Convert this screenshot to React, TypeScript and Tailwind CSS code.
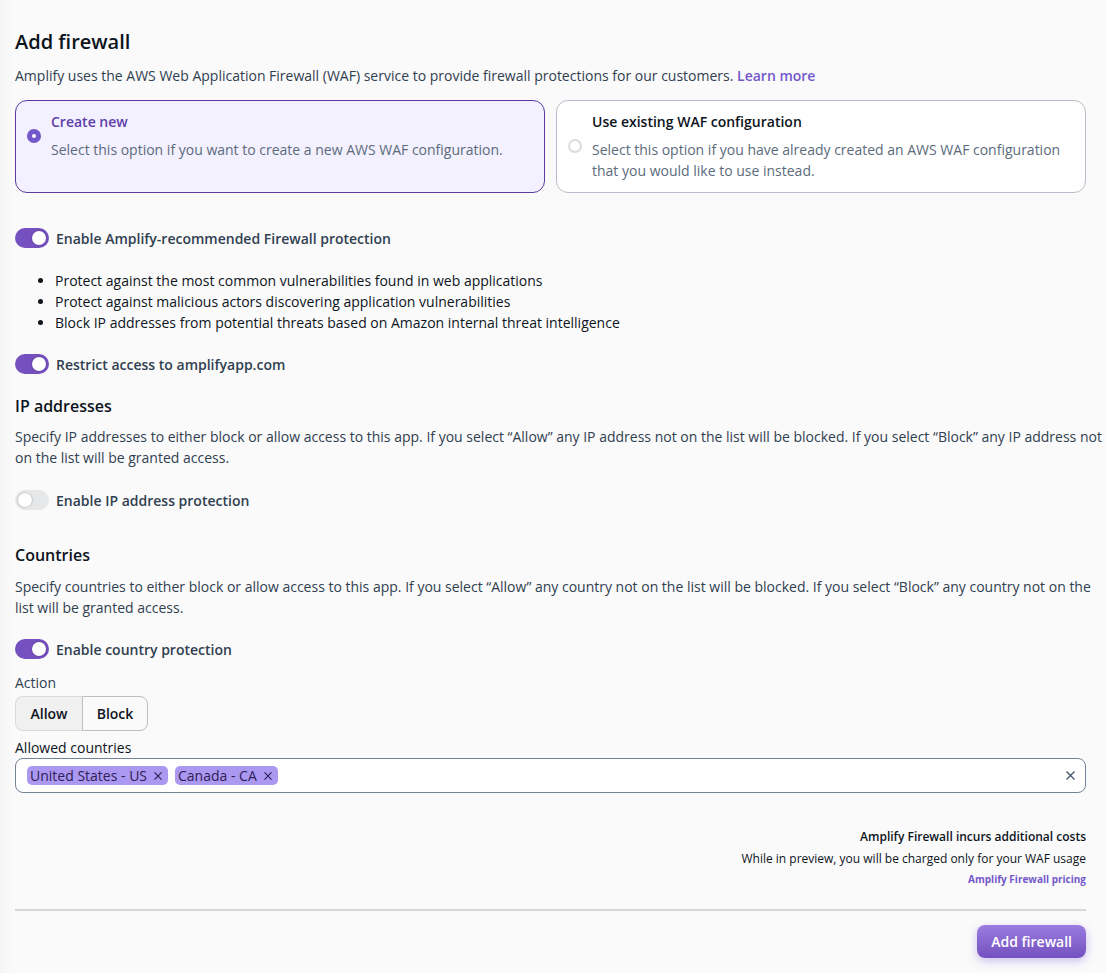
import { useId, useState } from "react";

function Toggle({ label, on }: { label: string; on?: boolean }) {
  return (
    <label className="flex h-5 w-fit items-start gap-[7px] text-sm leading-[22px] font-semibold text-[#304050]">
      <input type="checkbox" role="switch" defaultChecked={on} className="peer sr-only" />
      <span className="flex h-5 w-[34px] shrink-0 items-center rounded-full bg-[#e6e7e9] px-[3px] peer-checked:justify-end peer-checked:bg-[#7550bf]">
        <span className="size-3.5 rounded-full bg-white shadow-[0_0_2px_rgba(0,0,0,0.35)]" />
      </span>
      <span>{label}</span>
    </label>
  );
}

type OptionProps = {
  title: string;
  text: string;
  selected: boolean;
  onSelect: () => void;
};

function OptionCard({ title, text, selected, onSelect }: OptionProps) {
  const id = useId();
  return (
    <label
      htmlFor={id}
      className={
        selected
          ? "rounded-xl border border-[#5a3ba0] bg-[#f3f0ff] px-[11px] pt-2.5 pb-[11px]"
          : "rounded-xl border border-[#bcbbc9] bg-white px-[11px] pt-2.5 pb-[11px]"
      }
    >
      <span className="flex items-center gap-2.5">
        <input
          id={id}
          type="radio"
          name="waf-mode"
          checked={selected}
          onChange={onSelect}
          className="size-3.5 shrink-0 appearance-none rounded-full border-2 border-[#dcdcdc] bg-white checked:border-[5px] checked:border-[#7358cb]"
        />
        <span className="flex flex-col gap-1.5">
          <span
            className={
              selected
                ? "text-sm leading-[22px] font-semibold text-[#5f3fa9]"
                : "text-sm leading-[22px] font-semibold text-[#0d141c]"
            }
          >
            {title}
          </span>
          <span className="text-sm leading-[21px] text-[#5c6b7c]">{text}</span>
        </span>
      </span>
    </label>
  );
}

function Cross({ className }: { className: string }) {
  return (
    <svg viewBox="0 0 9 9" className={className} fill="none" stroke="currentColor" strokeWidth="1.3" aria-hidden="true">
      <path d="M0.5 0.5l8 8M8.5 0.5l-8 8" />
    </svg>
  );
}

function Tag({ name }: { name: string }) {
  return (
    <span className="flex h-[19px] items-center gap-[7px] rounded-[5px] bg-[#ab98f0] pr-1.5 pl-[3px] text-sm leading-[19px] text-[#2f2058]">
      {name}
      <button type="button" aria-label={`Remove ${name}`}>
        <Cross className="size-2" />
      </button>
    </span>
  );
}

export default function App() {
  const [mode, setMode] = useState("new");
  return (
    <main className="min-h-screen bg-[#fafafa] bg-[linear-gradient(to_right,#f5f5f5,#fafafa_14px)] pt-7 pr-5 pb-[15px] pl-[15px] font-['Open_Sans','Noto_Sans',sans-serif] text-sm leading-[21px] text-[#0d141c]">
      <h1 className="text-xl leading-7 font-semibold">Add firewall</h1>
      <p className="mt-[9px] text-[#304050]">
        Amplify uses the AWS Web Application Firewall (WAF) service to provide firewall protections for our customers.{" "}
        <a href="#learn-more" className="font-semibold text-[#7358cb]">
          Learn more
        </a>
      </p>

      <div className="mt-3.5 grid grid-cols-2 gap-[11px]">
        <OptionCard
          title="Create new"
          text="Select this option if you want to create a new AWS WAF configuration."
          selected={mode === "new"}
          onSelect={() => setMode("new")}
        />
        <OptionCard
          title="Use existing WAF configuration"
          text="Select this option if you have already created an AWS WAF configuration that you would like to use instead."
          selected={mode === "existing"}
          onSelect={() => setMode("existing")}
        />
      </div>

      <div className="mt-[35px]">
        <Toggle label="Enable Amplify-recommended Firewall protection" on />
      </div>
      <ul className="mt-[22px] mb-[21px] list-disc pl-10">
        <li>Protect against the most common vulnerabilities found in web applications</li>
        <li>Protect against malicious actors discovering application vulnerabilities</li>
        <li>Block IP addresses from potential threats based on Amazon internal threat intelligence</li>
      </ul>
      <Toggle label="Restrict access to amplifyapp.com" on />

      <section className="mt-5">
        <h2 className="text-base leading-6 font-semibold">IP addresses</h2>
        <p className="-mr-4 mt-2 mb-[22px] text-[#304050]">
          Specify IP addresses to either block or allow access to this app. If you select “Allow” any IP address not on
          the list will be blocked. If you select “Block” any IP address not <br />
          on the list will be granted access.
        </p>
        <Toggle label="Enable IP address protection" />
      </section>

      <section className="mt-[33px]">
        <h2 className="text-base leading-6 font-semibold">Countries</h2>
        <p className="-mr-4 mt-[9px] mb-[21px] text-[#304050]">
          Specify countries to either block or allow access to this app. If you select “Allow” any country not on the
          list will be blocked. If you select “Block” any country not on the <br />
          list will be granted access.
        </p>
        <Toggle label="Enable country protection" on />

        <p id="action-label" className="mt-[13px] text-[#304050]">
          Action
        </p>
        <div role="group" aria-labelledby="action-label" className="mt-[3px] flex h-[35px] font-semibold">
          <button
            type="button"
            aria-pressed="true"
            className="w-[67px] rounded-l-lg border border-r-0 border-[#d9dadc] bg-[#f0f0f0]"
          >
            Allow
          </button>
          <button type="button" aria-pressed="false" className="w-[66px] rounded-r-lg border border-[#bdbfc4] bg-[#fafafa]">
            Block
          </button>
        </div>

        <label htmlFor="countries" className="mt-1.5 block">
          Allowed countries
        </label>
        <div className="flex h-[35px] items-center gap-[7px] rounded-lg border border-[#758398] bg-white pr-2.5 pl-[11px]">
          <Tag name="United States - US" />
          <Tag name="Canada - CA" />
          <input id="countries" type="text" className="min-w-0 flex-1 bg-transparent outline-none" />
          <button type="button" aria-label="Clear all" className="text-[#44546a]">
            <Cross className="size-[9px]" />
          </button>
        </div>
      </section>

      <div className="mt-[33px] text-right">
        <p className="text-xs leading-[22px] font-semibold">Amplify Firewall incurs additional costs</p>
        <p className="text-xs leading-[22px]">While in preview, you will be charged only for your WAF usage</p>
        <a href="#pricing" className="block text-[10px] leading-[18px] font-bold text-[#7358cb]">
          Amplify Firewall pricing
        </a>
      </div>

      <hr className="mt-[21px] border-t-2 border-[#d5d7da]" />
      <div className="mt-3.5 flex justify-end">
        <button
          type="button"
          className="h-[33px] rounded-lg bg-linear-to-b from-[#9a7de0] to-[#7550bf] px-3.5 font-semibold text-white shadow-[0_3px_10px_rgba(117,80,223,0.35)]"
        >
          Add firewall
        </button>
      </div>
    </main>
  );
}
